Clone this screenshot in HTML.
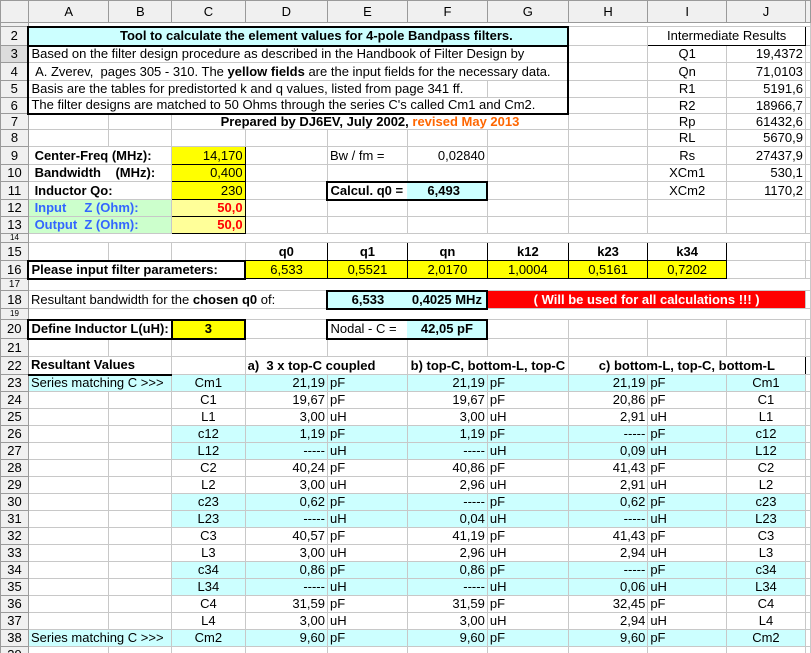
<!DOCTYPE html>
<html><head><meta charset="utf-8">
<style>
html,body{margin:0;padding:0;background:#fff;width:811px;height:653px;overflow:hidden}
table{border-collapse:collapse;table-layout:fixed;font-family:"Liberation Sans",Arial,sans-serif;font-size:13px;color:#000}
td{border:1px solid #c8c8c8;padding:0 2px;white-space:nowrap;overflow:hidden;line-height:14px;height:auto}
td.h{background:#f0f0f0;border-color:#9a9a9a;text-align:center;font-size:13px;padding:0}
tr.ch td{background:#f0f0f0;border-color:#9a9a9a;text-align:center;padding:0}
.c{text-align:center}.r{text-align:right}.b{font-weight:bold}
.cy{background:#ccffff}.y{background:#ffff00}.ly{background:#ffff99}.gr{background:#ccffcc}
.bk{border:1px solid #000}
.tk{border:2px solid #000}
.red{color:#ff0000}.blue{color:#3366ff}.or{color:#ff6600}
</style></head><body>
<table>
<colgroup><col style="width:29px"><col style="width:77px"><col style="width:60px"><col style="width:74px"><col style="width:83px"><col style="width:80px"><col style="width:80px"><col style="width:81px"><col style="width:82px"><col style="width:80px"><col style="width:80px"><col style="width:5px"></colgroup>
<tr class="ch" style="height:22px"><td></td><td>A</td><td>B</td><td>C</td><td>D</td><td>E</td><td>F</td><td>G</td><td>H</td><td>I</td><td>J</td><td></td></tr>
<tr style="height:4px"><td class="h" style="font-size:1px;line-height:1px"></td><td style="line-height:1px" colspan="11"></td></tr>
<tr style="height:19px"><td class="h">2</td><td colspan="7" class="cy b tk c" style="padding-left:38px">Tool to calculate the element values for 4-pole Bandpass filters.</td><td></td><td colspan="2" class="bk c">Intermediate Results</td><td></td></tr>
<tr style="height:17px"><td class="h" style="background:#dcdcdc">3</td><td colspan="7" style="border-left:2px solid #000;border-right:2px solid #000">Based on the filter design procedure as described in the Handbook of Filter Design by</td><td></td><td class="c">Q1</td><td class="r">19,4372</td><td></td></tr>
<tr style="height:18px"><td class="h">4</td><td colspan="7" style="border-left:2px solid #000;border-right:2px solid #000">&nbsp;A. Zverev,&nbsp; pages 305 - 310. The <b>yellow fields</b> are the input fields for the necessary data.</td><td></td><td class="c">Qn</td><td class="r">71,0103</td><td></td></tr>
<tr style="height:17px"><td class="h">5</td><td colspan="6" style="border-left:2px solid #000">Basis are the tables for predistorted k and q values, listed from page 341 ff.</td><td style="border-right:2px solid #000"></td><td></td><td class="c">R1</td><td class="r">5191,6</td><td></td></tr>
<tr style="height:16px"><td class="h">6</td><td colspan="7" style="border-left:2px solid #000;border-right:2px solid #000;border-bottom:2px solid #000">The filter designs are matched to 50 Ohms through the series C's called Cm1 and Cm2.</td><td></td><td class="c">R2</td><td class="r">18966,7</td><td></td></tr>
<tr style="height:16px"><td class="h">7</td><td></td><td></td><td colspan="5" class="c b">Prepared by DJ6EV, July 2002, <span class="or">revised May 2013</span></td><td></td><td class="c">Rp</td><td class="r">61432,6</td><td></td></tr>
<tr style="height:17px"><td class="h">8</td><td></td><td></td><td></td><td></td><td></td><td></td><td></td><td></td><td class="c">RL</td><td class="r">5670,9</td><td></td></tr>
<tr style="height:18px"><td class="h">9</td><td colspan="2" class="b">&nbsp;Center-Freq (MHz):</td><td class="y r bk">14,170</td><td></td><td>Bw / fm =</td><td class="r">0,02840</td><td></td><td></td><td class="c">Rs</td><td class="r">27437,9</td><td></td></tr>
<tr style="height:17px"><td class="h">10</td><td colspan="2" class="b">&nbsp;Bandwidth&nbsp;&nbsp;&nbsp; (MHz):</td><td class="y r bk">0,400</td><td></td><td></td><td></td><td></td><td></td><td class="c">XCm1</td><td class="r">530,1</td><td></td></tr>
<tr style="height:18px"><td class="h">11</td><td colspan="2" class="b">&nbsp;Inductor Qo:</td><td class="y r bk">230</td><td></td><td class="b" style="border:2px solid #000;border-right:none">Calcul. q0 =</td><td class="cy b" style="border:2px solid #000;border-left:none;padding-left:20px">6,493</td><td></td><td></td><td class="c">XCm2</td><td class="r">1170,2</td><td></td></tr>
<tr style="height:17px"><td class="h">12</td><td colspan="2" class="gr b blue">&nbsp;Input&nbsp;&nbsp;&nbsp;&nbsp; Z (Ohm):</td><td class="ly r b red bk">50,0</td><td></td><td></td><td></td><td></td><td></td><td></td><td></td><td></td></tr>
<tr style="height:17px"><td class="h">13</td><td colspan="2" class="gr b blue">&nbsp;Output&nbsp; Z (Ohm):</td><td class="ly r b red bk">50,0</td><td></td><td></td><td></td><td></td><td></td><td></td><td></td><td></td></tr>
<tr style="height:9px"><td class="h" style="font-size:8px;line-height:8px">14</td><td colspan="11" style="line-height:6px"></td></tr>
<tr style="height:18px"><td class="h">15</td><td></td><td></td><td></td><td class="c b bk">q0</td><td class="c b bk">q1</td><td class="c b bk">qn</td><td class="c b bk">k12</td><td class="c b bk">k23</td><td class="c b bk">k34</td><td></td><td></td></tr>
<tr style="height:18px"><td class="h">16</td><td colspan="3" class="b" style="border:2px solid #000">Please input filter parameters:</td><td class="c y bk">6,533</td><td class="c y bk">0,5521</td><td class="c y bk">2,0170</td><td class="c y bk">1,0004</td><td class="c y bk">0,5161</td><td class="c y bk">0,7202</td><td></td><td></td></tr>
<tr style="height:12px"><td class="h" style="font-size:10px;line-height:10px">17</td><td colspan="11" style="line-height:8px"></td></tr>
<tr style="height:18px"><td class="h">18</td><td colspan="4">Resultant bandwidth for the <b>chosen q0</b> of:</td><td class="cy b c" style="border:2px solid #000;border-right:none">6,533</td><td class="cy b c" style="border:2px solid #000;border-left:none">0,4025 MHz</td><td colspan="4" class="c b" style="background:#ff0000;color:#fff">( Will be used for all calculations !!! )</td><td></td></tr>
<tr style="height:11px"><td class="h" style="font-size:8px;line-height:8px">19</td><td colspan="11" style="line-height:7px"></td></tr>
<tr style="height:19px"><td class="h">20</td><td colspan="2" class="b" style="border:2px solid #000">Define Inductor L(uH):</td><td class="y c b" style="border:2px solid #000">3</td><td></td><td style="border:2px solid #000;border-right:none">Nodal - C =</td><td class="cy b c" style="border:2px solid #000;border-left:none">42,05 pF</td><td></td><td></td><td></td><td></td><td></td></tr>
<tr style="height:18px"><td class="h">21</td><td></td><td></td><td></td><td></td><td></td><td></td><td></td><td></td><td></td><td></td><td></td></tr>
<tr style="height:18px"><td class="h">22</td><td colspan="2" class="b" style="border-bottom:2px solid #000">Resultant Values</td><td></td><td colspan="2" class="b" style="border-top:1px solid #000;border-left:1px solid #000">a)&nbsp; 3 x top-C coupled</td><td colspan="2" class="b c" style="border-top:1px solid #000">b) top-C, bottom-L, top-C</td><td colspan="3" class="b c" style="border-top:1px solid #000;border-right:1px solid #000">c) bottom-L, top-C, bottom-L</td><td></td></tr>
<tr style="height:17px"><td class="h">23</td><td colspan="2" class="cy">Series matching C &gt;&gt;&gt;</td><td class="cy c">Cm1</td><td class="cy r">21,19</td><td class="cy">pF</td><td class="cy r">21,19</td><td class="cy">pF</td><td class="cy r">21,19</td><td class="cy">pF</td><td class="cy c">Cm1</td><td></td></tr>
<tr style="height:17px"><td class="h">24</td><td></td><td></td><td class="c">C1</td><td class="r">19,67</td><td>pF</td><td class="r">19,67</td><td>pF</td><td class="r">20,86</td><td>pF</td><td class="c">C1</td><td></td></tr>
<tr style="height:17px"><td class="h">25</td><td></td><td></td><td class="c">L1</td><td class="r">3,00</td><td>uH</td><td class="r">3,00</td><td>uH</td><td class="r">2,91</td><td>uH</td><td class="c">L1</td><td></td></tr>
<tr style="height:17px"><td class="h">26</td><td></td><td></td><td class="cy c">c12</td><td class="cy r">1,19</td><td class="cy">pF</td><td class="cy r">1,19</td><td class="cy">pF</td><td class="cy r">-----</td><td class="cy">pF</td><td class="cy c">c12</td><td></td></tr>
<tr style="height:17px"><td class="h">27</td><td></td><td></td><td class="cy c">L12</td><td class="cy r">-----</td><td class="cy">uH</td><td class="cy r">-----</td><td class="cy">uH</td><td class="cy r">0,09</td><td class="cy">uH</td><td class="cy c">L12</td><td></td></tr>
<tr style="height:17px"><td class="h">28</td><td></td><td></td><td class="c">C2</td><td class="r">40,24</td><td>pF</td><td class="r">40,86</td><td>pF</td><td class="r">41,43</td><td>pF</td><td class="c">C2</td><td></td></tr>
<tr style="height:17px"><td class="h">29</td><td></td><td></td><td class="c">L2</td><td class="r">3,00</td><td>uH</td><td class="r">2,96</td><td>uH</td><td class="r">2,91</td><td>uH</td><td class="c">L2</td><td></td></tr>
<tr style="height:17px"><td class="h">30</td><td></td><td></td><td class="cy c">c23</td><td class="cy r">0,62</td><td class="cy">pF</td><td class="cy r">-----</td><td class="cy">pF</td><td class="cy r">0,62</td><td class="cy">pF</td><td class="cy c">c23</td><td></td></tr>
<tr style="height:17px"><td class="h">31</td><td></td><td></td><td class="cy c">L23</td><td class="cy r">-----</td><td class="cy">uH</td><td class="cy r">0,04</td><td class="cy">uH</td><td class="cy r">-----</td><td class="cy">uH</td><td class="cy c">L23</td><td></td></tr>
<tr style="height:17px"><td class="h">32</td><td></td><td></td><td class="c">C3</td><td class="r">40,57</td><td>pF</td><td class="r">41,19</td><td>pF</td><td class="r">41,43</td><td>pF</td><td class="c">C3</td><td></td></tr>
<tr style="height:17px"><td class="h">33</td><td></td><td></td><td class="c">L3</td><td class="r">3,00</td><td>uH</td><td class="r">2,96</td><td>uH</td><td class="r">2,94</td><td>uH</td><td class="c">L3</td><td></td></tr>
<tr style="height:17px"><td class="h">34</td><td></td><td></td><td class="cy c">c34</td><td class="cy r">0,86</td><td class="cy">pF</td><td class="cy r">0,86</td><td class="cy">pF</td><td class="cy r">-----</td><td class="cy">pF</td><td class="cy c">c34</td><td></td></tr>
<tr style="height:17px"><td class="h">35</td><td></td><td></td><td class="cy c">L34</td><td class="cy r">-----</td><td class="cy">uH</td><td class="cy r">-----</td><td class="cy">uH</td><td class="cy r">0,06</td><td class="cy">uH</td><td class="cy c">L34</td><td></td></tr>
<tr style="height:17px"><td class="h">36</td><td></td><td></td><td class="c">C4</td><td class="r">31,59</td><td>pF</td><td class="r">31,59</td><td>pF</td><td class="r">32,45</td><td>pF</td><td class="c">C4</td><td></td></tr>
<tr style="height:17px"><td class="h">37</td><td></td><td></td><td class="c">L4</td><td class="r">3,00</td><td>uH</td><td class="r">3,00</td><td>uH</td><td class="r">2,94</td><td>uH</td><td class="c">L4</td><td></td></tr>
<tr style="height:17px"><td class="h">38</td><td colspan="2" class="cy">Series matching C &gt;&gt;&gt;</td><td class="cy c">Cm2</td><td class="cy r">9,60</td><td class="cy">pF</td><td class="cy r">9,60</td><td class="cy">pF</td><td class="cy r">9,60</td><td class="cy">pF</td><td class="cy c">Cm2</td><td></td></tr>
<tr style="height:17px"><td class="h">39</td><td></td><td></td><td></td><td></td><td></td><td></td><td></td><td></td><td></td><td></td><td></td></tr>
</table>
</body></html>
